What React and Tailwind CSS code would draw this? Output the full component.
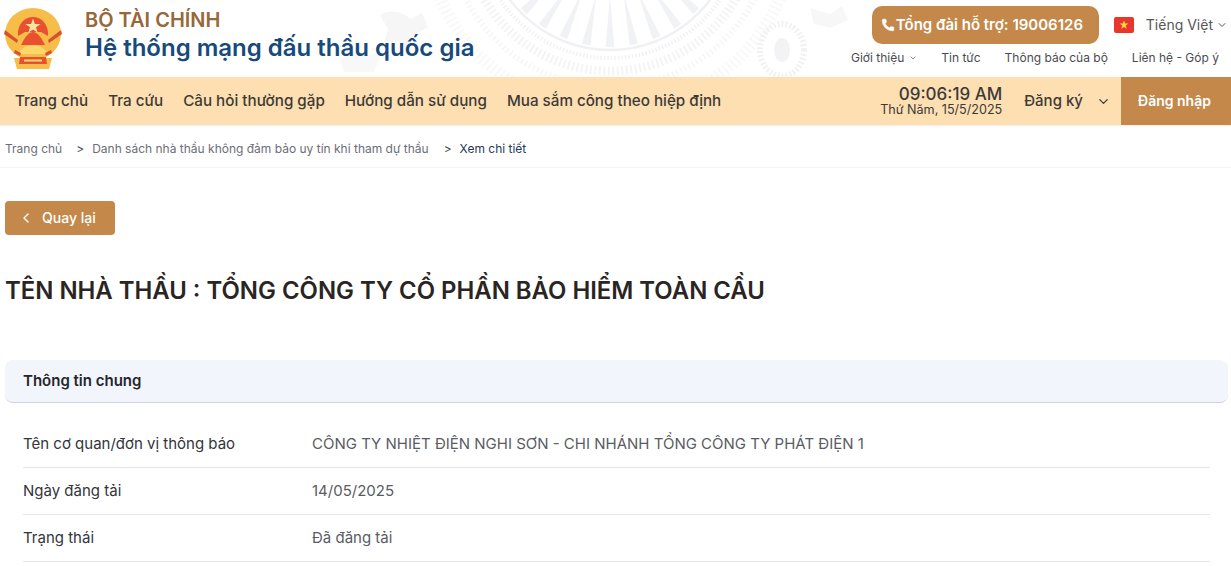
import React from 'react';
import { ChevronDown, ChevronLeft, Phone } from 'lucide-react';

const navItems = ['Trang chủ', 'Tra cứu', 'Câu hỏi thường gặp', 'Hướng dẫn sử dụng', 'Mua sắm công theo hiệp định'];

const rows = [
  ['Tên cơ quan/đơn vị thông báo', 'CÔNG TY NHIỆT ĐIỆN NGHI SƠN - CHI NHÁNH TỔNG CÔNG TY PHÁT ĐIỆN 1'],
  ['Ngày đăng tải', '14/05/2025'],
  ['Trạng thái', 'Đã đăng tải'],
];

const Emblem = () => (
  <svg viewBox="0 0 60 62" className="w-[60px] h-[62px]">
    <ellipse cx="30" cy="26" rx="28" ry="26" fill="#f6bd48" />
    <path d="M11 50h38l-3 11H14z" fill="#f6bd48" />
    <path d="M15 28C14 16 22 9 30 9c8 0 16 7 15 19l-7-4H22z" fill="#e9502f" />
    <path d="M30 10.500l1.900 5.400h5.700l-4.600 3.400 1.700 5.400-4.700-3.300-4.700 3.300 1.700-5.400-4.600-3.400h5.700z" fill="#fbe3a0" />
    <path d="M18 37c4-8 8-13 12-13s8 5 12 13z" fill="#e9502f" />
    <path d="M15 46c3-6 9-9 15-9s12 3 15 9z" fill="#fbd869" />
    <path d="M2 22l13 10-1 3L1 26zM58 22L45 32l1 3 13-9z" fill="#d9502f" />
    <path d="M12 42l6 3-1 3-6-3zM48 42l-6 3 1 3 6-3z" fill="#d9502f" />
    <path d="M17 49h26l1 7H16z" fill="#e9502f" />
    <path d="M21 51.500h18v2H21z" fill="#fbd869" />
  </svg>
);

const Flag = () => (
  <svg viewBox="0 0 20 16" className="w-5 h-4">
    <rect width="20" height="16" rx="2" fill="#e8362d" />
    <path d="M10 3.500l1.100 3.100h3.300l-2.700 2 1 3.200L10 9.900l-2.700 1.900 1-3.200-2.700-2h3.300z" fill="#fbdc45" />
  </svg>
);

// faint drum pattern behind the top header
const DrumPattern = () => {
  const cx = 610;
  const cy = -75;
  const rays = [];
  for (let i = 0; i < 32; i++) {
    const a = (i * Math.PI * 2) / 32;
    const w = 0.035;
    const tipX = cx + Math.cos(a) * 70;
    const tipY = cy + Math.sin(a) * 70;
    const x1 = cx + Math.cos(a - w) * 122;
    const y1 = cy + Math.sin(a - w) * 122;
    const x2 = cx + Math.cos(a + w) * 122;
    const y2 = cy + Math.sin(a + w) * 122;
    rays.push(<path key={i} d={`M${tipX} ${tipY}L${x1} ${y1}L${x2} ${y2}z`} fill="#f1f2f5" />);
  }
  return (
    <svg className="absolute left-0 top-0 w-[1231px] h-[77px]" viewBox="0 0 1231 77" fill="none">
      {rays}
      <circle cx={cx} cy={cy} r="125" stroke="#f1f1f4" strokeWidth="2.500" />
      <circle cx={cx} cy={cy} r="133" stroke="#f2f2f4" strokeWidth="4" strokeDasharray="1.500 2" />
      <circle cx={cx} cy={cy} r="146" stroke="#f4f4f6" strokeWidth="9" strokeDasharray="2 2.500" />
      <circle cx={cx} cy={cy} r="162" stroke="#f5f5f7" strokeWidth="6" strokeDasharray="1.500 3" />
      <circle cx={cx} cy={cy} r="185" stroke="#f8f8f9" strokeWidth="12" strokeDasharray="2 3" />
      <ellipse cx="782" cy="50" rx="22" ry="26" stroke="#f2f2f4" strokeWidth="6" strokeDasharray="2 2" />
      <ellipse cx="782" cy="50" rx="8" ry="12" fill="#f3f3f5" />
      <path d="M380 15c10-6 22-4 30 4l12-6 6 14-14 8-6 14-10-8-14 2 4-14z" fill="#f6f6f7" />
      <path d="M340 60l16-12 10 8 16-4-8 20h-30z" fill="#f8f8f9" />
      <path d="M810 8l20 6 12-8 6 14-18 8-16-4z" fill="#f7f7f8" />
    </svg>
  );
};

export default function App() {
  return (
    <div className="w-[1231px] h-[566px] overflow-hidden bg-white font-['Inter',sans-serif]">
      <header className="relative h-[77px] flex justify-between bg-white overflow-hidden">
        <DrumPattern />
        <div className="relative flex items-center pl-[3px]">
          <Emblem />
          <div className="ml-[22px] -mt-[8px]">
            <div className="text-[20px] leading-[26px] font-semibold text-[#96683a]">BỘ TÀI CHÍNH</div>
            <div className="text-[24px] leading-[30px] font-semibold text-[#174a7c]">Hệ thống mạng đấu thầu quốc gia</div>
          </div>
        </div>
        <div className="relative flex flex-col items-end pr-[3px] pt-[6px]">
          <div className="flex items-center">
            <div className="h-[38px] w-[227px] flex items-center pl-[9px] rounded-[10px] bg-[#c3884a] text-[15px] font-semibold text-white">
              <Phone size={14} fill="white" strokeWidth={1} />
              <span className="ml-[1px]">Tổng đài hỗ trợ: 19006126</span>
            </div>
            <div className="ml-[15px] flex items-center text-sm text-[#55565a]">
              <Flag />
              <span className="ml-3">Tiếng Việt</span>
              <ChevronDown size={12} className="ml-[3px]" />
            </div>
          </div>
          <div className="mt-[6px] flex items-center gap-6 pr-[9px] text-xs leading-[16px] text-[#4a4b50]">
            <span className="flex items-center">Giới thiệu<ChevronDown size={8} className="ml-[5px]" /></span>
            <span>Tin tức</span>
            <span>Thông báo của bộ</span>
            <span>Liên hệ - Góp ý</span>
          </div>
        </div>
      </header>

      <nav className="h-12 flex items-center justify-between bg-[#fedfb1] shadow-[0_1px_2px_rgba(0,0,0,0.08)]">
        <div className="flex items-center gap-5 pl-[15px] text-[15.2px] font-medium text-[#3d3a36]">
          {navItems.map((item) => (
            <span key={item}>{item}</span>
          ))}
        </div>
        <div className="flex items-center h-full">
          <div className="text-right text-[#3a3a3a]">
            <div className="text-[17px] leading-[18px] font-medium">09:06:19 AM</div>
            <div className="text-[12.6px] leading-[14px]">Thứ Năm, 15/5/2025</div>
          </div>
          <span className="ml-[22px] text-[15px] font-medium text-[#3d3a36]">Đăng ký</span>
          <ChevronDown size={15} className="ml-[13px] text-[#3d3a36]" />
          <div className="ml-[10px] h-full w-[110px] flex items-center justify-center bg-[#c3884a] pr-[3px] text-sm font-semibold text-white">
            Đăng nhập
          </div>
        </div>
      </nav>

      <div className="h-[43px] flex items-center border-b border-gray-100 px-[5px] pt-[6px] text-xs text-[#6b6e76]">
        <span>Trang chủ</span>
        <span className="ml-[14px] mr-[8px] text-[#4a4b50]">&gt;</span>
        <span>Danh sách nhà thầu không đảm bảo uy tín khi tham dự thầu</span>
        <span className="ml-[15px] mr-[8px] text-[#4a4b50]">&gt;</span>
        <span className="text-[#1f3a5a]">Xem chi tiết</span>
      </div>

      <main className="pl-[5px] pr-[3px]">
        <button className="mt-[33px] h-[34px] w-[110px] flex items-center rounded bg-[#c3884a] pl-[13px] text-sm font-medium text-white">
          <ChevronLeft size={16} />
          <span className="ml-[8px]">Quay lại</span>
        </button>

        <h1 className="mt-[39px] text-[23.9px] leading-[34px] font-semibold text-[#2a2522]">
          TÊN NHÀ THẦU : TỔNG CÔNG TY CỔ PHẦN BẢO HIỂM TOÀN CẦU
        </h1>

        <div className="mt-[52px] h-[43px] flex items-center rounded-lg bg-[#f3f5fc] border-b border-[#cfd2d9] pl-[18px] text-[15px] font-semibold text-[#24262b]">
          Thông tin chung
        </div>

        <div className="mt-[18px] px-[18px]">
          {rows.map(([label, value]) => (
            <div key={label} className="h-[47px] flex items-center border-b border-gray-200 text-[15px]">
              <span className="w-[289px] text-[#33353a]">{label}</span>
              <span className="text-[#5a5c63]">{value}</span>
            </div>
          ))}
        </div>
      </main>
    </div>
  );
}
